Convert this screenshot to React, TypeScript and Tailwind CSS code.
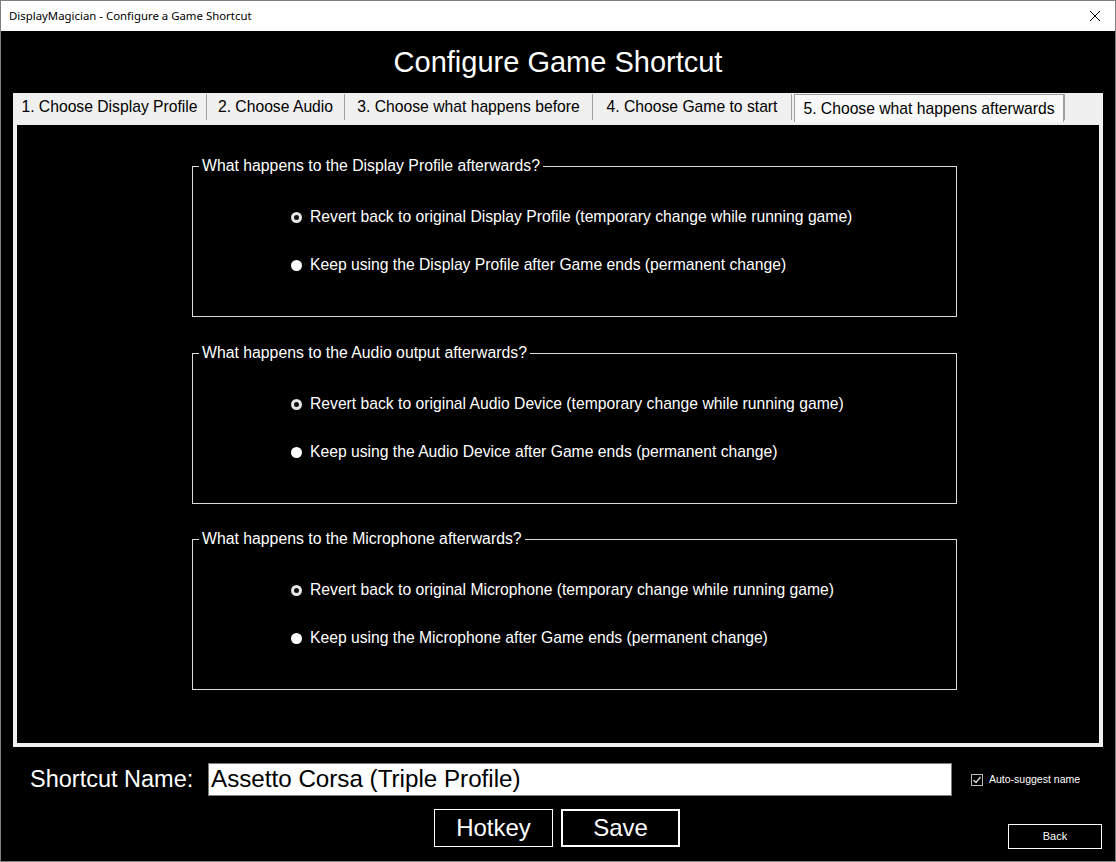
import React from "react";

const F = { fontFamily: '"Liberation Sans", Arial, sans-serif' };

function Radio({ checked }: { checked: boolean }) {
  return checked ? (
    <span className="inline-block w-[11px] h-[11px] rounded-full border-[3px] border-[#e6e6e6] bg-[#111]" />
  ) : (
    <span className="inline-block w-[11px] h-[11px] rounded-full bg-white" />
  );
}

function Group({ title, a, b, mt }: { title: string; a: string; b: string; mt: string }) {
  return (
    <fieldset className={`ml-[175px] w-[765px] h-[160px] border border-[#dcdcdc] ${mt}`}>
      <legend className="ml-[6px] px-[3px] text-[15.8px] leading-[18px] text-white">{title}</legend>
      <div className="flex flex-col pl-[98px] pt-[32px] gap-[28px]">
        <div className="flex items-center h-[20px] gap-[8px] text-[15.7px] text-white">
          <Radio checked />
          <span>{a}</span>
        </div>
        <div className="flex items-center h-[20px] gap-[8px] text-[15.7px] text-white">
          <Radio checked={false} />
          <span>{b}</span>
        </div>
      </div>
    </fieldset>
  );
}

export default function App() {
  const tabs: [string, string][] = [
    ["1. Choose Display Profile", "w-[194px]"],
    ["2. Choose Audio", "w-[138px]"],
    ["3. Choose what happens before", "w-[248px]"],
    ["4. Choose Game to start", "w-[199px]"],
  ];
  return (
    <div className="w-[1116px] h-[862px] flex flex-col border border-[#7f7f7f] bg-black overflow-hidden" style={F}>
      {/* title bar */}
      <div className="h-[30px] bg-white flex items-center justify-between pl-[8px] pr-[10px] shrink-0">
        <span className="text-[11.4px] text-black" style={{ fontFamily: '"Noto Sans", sans-serif' }}>
          DisplayMagician - Configure a Game Shortcut
        </span>
        <svg width="12" height="12" viewBox="0 0 12 12" className="mr-[4px]">
          <path d="M1 1 L11 11 M11 1 L1 11" stroke="#000" strokeWidth="1" />
        </svg>
      </div>

      {/* heading */}
      <div className="h-[62px] flex items-center justify-center shrink-0">
        <h1 className="text-[29px] text-white leading-none">Configure Game Shortcut</h1>
      </div>

      {/* tab control */}
      <div className="mx-[12px] flex flex-col">
        <div className="h-[29px] bg-[#f0f0f0] flex items-stretch text-[15.7px] text-[#000]">
          {tabs.map(([t, w]) => (
            <div key={t} className={`${w} flex items-center justify-center border-r border-[#a0a0a0] mt-[1px] mb-[2px] shrink-0`}>
              {t}
            </div>
          ))}
          <div className="w-[270px] shrink-0 flex items-center justify-center ml-[2px] mt-[1px] bg-[#f9f9f9] border border-[#a0a0a0] border-b-0">
            5. Choose what happens afterwards
          </div>
          <div className="border-l border-[#a0a0a0] mt-[1px] mb-[2px]" />
        </div>
        <div className="h-[625px] border-4 border-t-[3px] border-[#f0f0f0] bg-black flex flex-col">
          <Group
            mt="mt-[32px]"
            title="What happens to the Display Profile afterwards?"
            a="Revert back to original Display Profile (temporary change while running game)"
            b="Keep using the Display Profile after Game ends (permanent change)"
          />
          <Group
            mt="mt-[27px]"
            title="What happens to the Audio output afterwards?"
            a="Revert back to original Audio Device (temporary change while running game)"
            b="Keep using the Audio Device after Game ends (permanent change)"
          />
          <Group
            mt="mt-[26px]"
            title="What happens to the Microphone afterwards?"
            a="Revert back to original Microphone (temporary change while running game)"
            b="Keep using the Microphone after Game ends (permanent change)"
          />
        </div>
      </div>

      {/* bottom */}
      <div className="flex flex-col">
        <div className="flex items-center mt-[16px] h-[33px]">
          <span className="pl-[29px] w-[207px] text-[23.5px] text-white leading-none">Shortcut Name:</span>
          <div className="w-[744px] h-[33px] bg-white border border-[#7a7a7a] flex items-center pl-[2px]">
            <span className="text-[24.2px] text-black leading-none">Assetto Corsa (Triple Profile)</span>
          </div>
          <div className="ml-[19px] flex items-center gap-[6px]">
            <span className="w-[12px] h-[12px] border border-[#bdbdbd] bg-black flex items-center justify-center">
              <svg width="10" height="10" viewBox="0 0 10 10">
                <path d="M1.5 5 L4 7.5 L8.5 2" stroke="#e0e0e0" strokeWidth="1.3" fill="none" />
              </svg>
            </span>
            <span className="text-[10.5px] text-white">Auto-suggest name</span>
          </div>
        </div>
        <div className="flex items-start mt-[13px] pl-[433px]">
          <div className="w-[119px] h-[38px] border border-white flex items-center justify-center text-[24px] text-white">
            Hotkey
          </div>
          <div className="ml-[8px] w-[119px] h-[38px] border-2 border-white flex items-center justify-center text-[24px] text-white">
            Save
          </div>
          <div className="ml-[328px] mt-[15px] w-[94px] h-[25px] border border-white flex items-center justify-center text-[11px] text-white">
            Back
          </div>
        </div>
      </div>
    </div>
  );
}
